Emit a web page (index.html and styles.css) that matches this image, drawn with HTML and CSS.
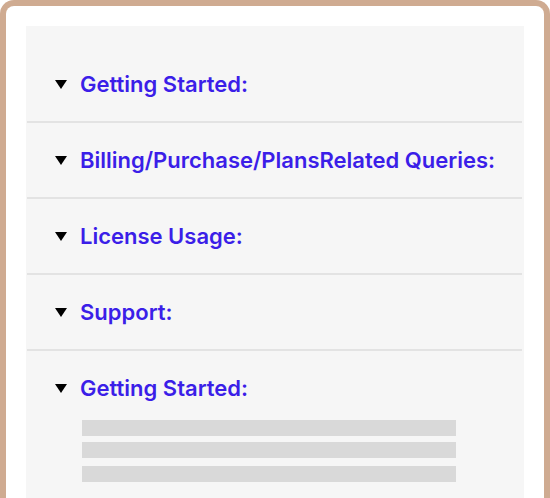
FILE: index.html
```html
<!DOCTYPE html>
<html lang="en">
<head>
<meta charset="utf-8">
<title>FAQ</title>
<link rel="stylesheet" href="styles.css">
</head>
<body>
<div class="frame">
  <div class="panel">
    <div class="item">
      <div class="summary"><span class="caret"></span><span class="title">Getting Started:</span></div>
    </div>
    <div class="item">
      <div class="summary"><span class="caret"></span><span class="title">Billing/Purchase/PlansRelated Queries:</span></div>
    </div>
    <div class="item">
      <div class="summary"><span class="caret"></span><span class="title">License Usage:</span></div>
    </div>
    <div class="item">
      <div class="summary"><span class="caret"></span><span class="title">Support:</span></div>
    </div>
    <div class="item open">
      <div class="summary"><span class="caret"></span><span class="title">Getting Started:</span></div>
      <div class="content">
        <div class="bar"></div>
        <div class="bar"></div>
        <div class="bar bar-last"></div>
      </div>
    </div>
  </div>
</div>
</body>
</html>
```
FILE: styles.css
```css
html, body {
  margin: 0;
  padding: 0;
  background: #ffffff;
}
body {
  width: 550px;
  height: 498px;
  overflow: hidden;
  font-family: "Inter", "Liberation Sans", sans-serif;
}
.frame {
  box-sizing: border-box;
  width: 550px;
  height: 498px;
  border: 6px solid #cfab91;
  border-bottom: 0;
  border-radius: 14px 14px 0 0;
  background: #ffffff;
  padding: 20px 20px 0 20px;
}
.panel {
  background: #f6f6f6;
  height: 100%;
  padding-top: 21px;
  box-sizing: border-box;
  overflow: hidden;
}
.item {
  margin: 0 2px 0 1px;
  border-bottom: 2px solid #e3e3e3;
}
.item.open {
  border-bottom: none;
}
.summary {
  display: flex;
  align-items: center;
  height: 74px;
  padding-left: 28px;
}
.caret {
  width: 0;
  height: 0;
  border-left: 6px solid transparent;
  border-right: 6px solid transparent;
  border-top: 9px solid #000000;
  margin-right: 13px;
}
.title {
  font-size: 22px;
  font-weight: 600;
  color: #3b1ee8;
  line-height: 28px;
}
.content {
  padding: 0 0 0 55px;
  margin-top: -5px;
  display: flex;
  flex-direction: column;
  gap: 6px;
}
.bar {
  width: 374px;
  height: 16px;
  background: #d9d9d9;
}
.bar-last {
  margin-top: 2px;
}
```
